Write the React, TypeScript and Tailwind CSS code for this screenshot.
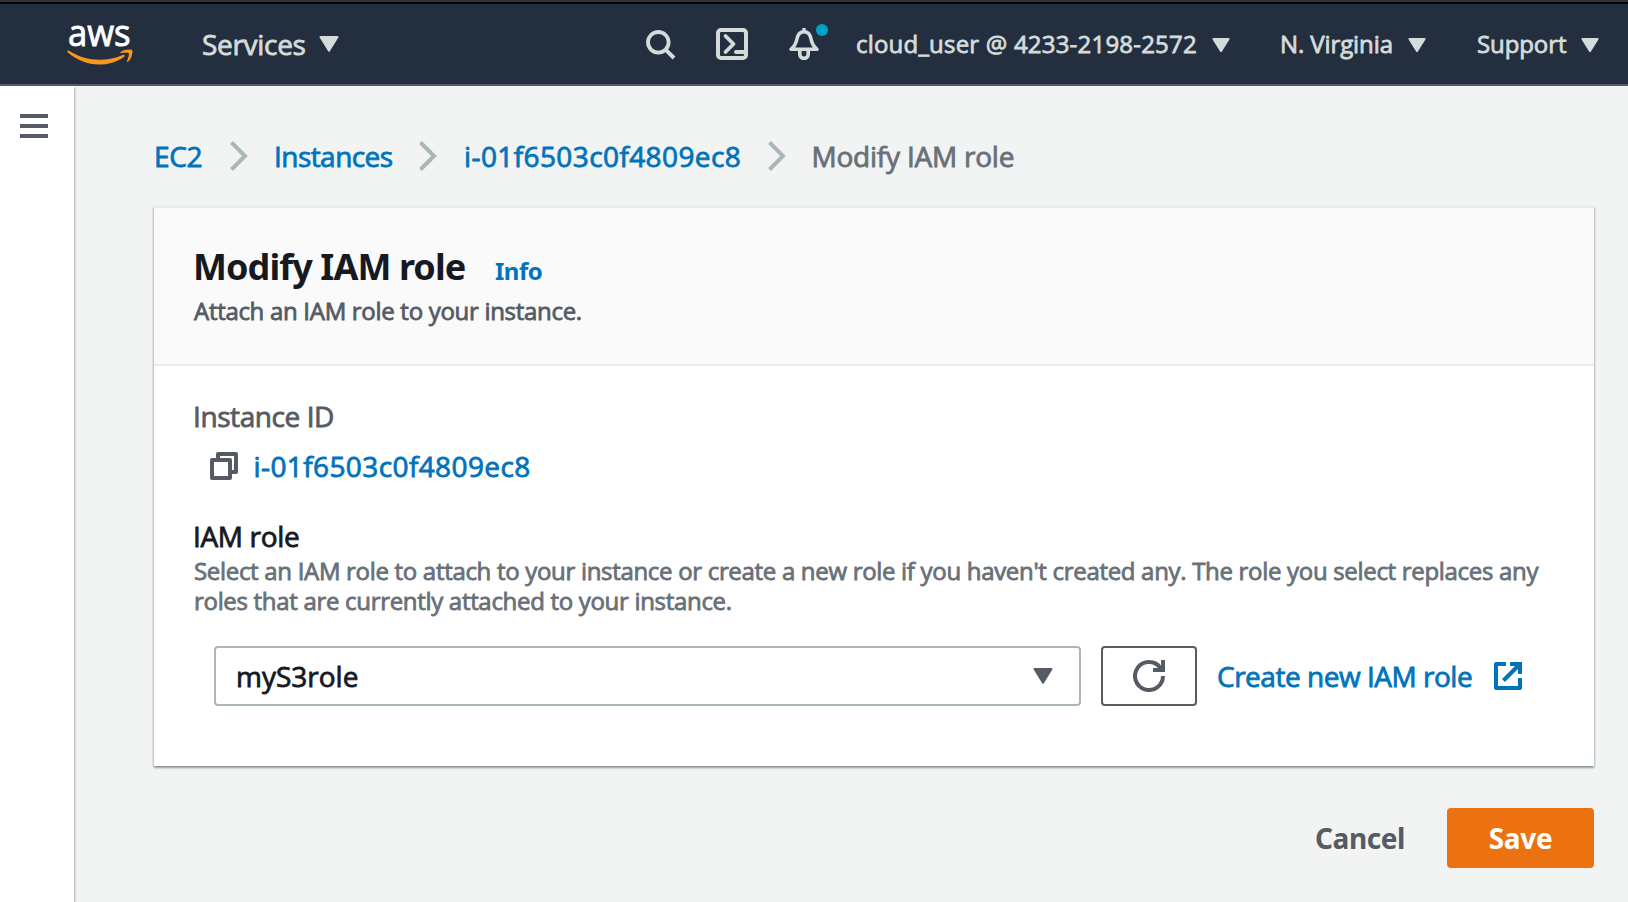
import React from "react";

function Caret({ className, small }: { className: string; small?: boolean }) {
  return (
    <svg
      className={"shrink-0 " + className}
      width={small ? 18 : 20}
      height={small ? 14.5 : 16}
      viewBox="0 0 20 16"
      preserveAspectRatio="none"
    >
      <path d="M1.5 1h17L10 14.6z" fill="currentColor" stroke="currentColor" strokeWidth="2" strokeLinejoin="round" />
    </svg>
  );
}

function Chevron() {
  return (
    <svg className="shrink-0 text-[#aab7b8]" width="18" height="30" viewBox="0 0 18 30">
      <path d="M1.5 1.5 15 15 1.5 28.5" fill="none" stroke="currentColor" strokeWidth="4" />
    </svg>
  );
}

function AwsLogo() {
  return (
    <svg className="shrink-0" width="68" height="74" viewBox="0 -14 68 74">
      <text
        x="2"
        y="25"
        textLength="62.500"
        lengthAdjust="spacingAndGlyphs"
        fill="#fff"
        stroke="#fff"
        strokeWidth="0.9"
        className="font-['Open_Sans',sans-serif] text-[36px]"
      >
        aws
      </text>
      <g transform="translate(0 -1)" fill="#f7981d">
        <path d="M1.200 31.200c.3-.6.9-.8 1.600-.4 9.600 5.800 19.600 9 30.600 9 7.500 0 15.600-1.600 23.400-4.900 1.500-.6 2.600 1 1.200 2-7.200 5.100-16.600 7.600-24.800 7.600-11.800 0-22.600-4.500-31.300-12-.6-.5-.9-.9-.7-1.300z" />
        <path d="M54.300 32.200c3.200-2.500 8.800-3 11.200-2.400 1 .3 1 1.400.9 2.700-.3 3.100-1.700 6.900-4.200 9.100-.8.700-1.500.3-1.200-.6.9-2.300 2.600-6.600 1.800-7.700-.8-1-5-.6-7.500-.3-1 .1-1.500-.4-1-.8z" />
      </g>
    </svg>
  );
}

function SearchIcon() {
  return (
    <svg className="shrink-0" width="30" height="30" viewBox="0 0 30 30" fill="none" stroke="currentColor">
      <circle cx="12.300" cy="12.300" r="10.300" strokeWidth="3.800" />
      <path d="M19.600 19.600 28 28" strokeWidth="4" />
    </svg>
  );
}

function TerminalIcon() {
  return (
    <svg className="shrink-0" width="32" height="32" viewBox="0 0 32 32" fill="none" stroke="currentColor">
      <rect x="2" y="2" width="28" height="28" rx="3" strokeWidth="4" />
      <path d="M9.500 8 17.500 16 9.500 24" strokeWidth="3.800" strokeLinecap="round" strokeLinejoin="round" />
      <path d="M20 24h9" strokeWidth="4" strokeLinecap="round" />
    </svg>
  );
}

function BellIcon() {
  return (
    <svg className="shrink-0" width="32" height="32" viewBox="0 0 32 32" fill="none" stroke="currentColor">
      <path
        d="M3 21.300C7 18 8 15.500 8.800 11.500 9.700 6.500 12 3.800 16 3.800s6.300 2.700 7.200 7.700c.8 4 1.800 6.500 5.800 9.800z"
        strokeWidth="3.600"
        strokeLinejoin="round"
      />
      <path d="M16 0v4" strokeWidth="3.400" />
      <path d="M11.800 23v3.200a4.200 4.200 0 0 0 8.400 0V23" strokeWidth="3.600" />
    </svg>
  );
}

function CopyIcon() {
  return (
    <svg className="shrink-0 text-[#545b64]" width="28" height="28" viewBox="0 0 28 28" fill="none" stroke="currentColor" strokeWidth="4" strokeLinejoin="round">
      <path d="M8 7V2h18v18h-5" />
      <path d="M2 8h18v18H2z" />
    </svg>
  );
}

function RefreshIcon() {
  return (
    <svg width="32" height="32" viewBox="0 0 32 32" fill="none" stroke="currentColor" strokeWidth="4">
      <path d="M30 16A14 14 0 1 1 27.200 7.600L28.400 10" />
      <path d="M30 0v10H20" />
    </svg>
  );
}

function ExternalIcon() {
  return (
    <svg className="shrink-0" width="28" height="28" viewBox="0 0 28 28" fill="none" stroke="currentColor" strokeWidth="4">
      <path d="M12 2H2v24h24V16" strokeLinejoin="round" />
      <path d="M16 2h10v10" />
      <path d="M25.500 2.500 9.500 18.500" />
    </svg>
  );
}

export default function App() {
  return (
    <div className="flex h-[902px] w-[1628px] flex-col overflow-hidden bg-[#f2f3f3] font-['Open_Sans','Noto_Sans',sans-serif] [-webkit-text-stroke:0.8px] whitespace-nowrap">
      <div className="h-[2px] shrink-0 bg-[#323237]" />
      <div className="h-[2px] shrink-0 bg-[#070707]" />
      <header className="flex h-[82px] shrink-0 items-center border-b-2 border-[#545b64] bg-[#232f3e] pl-[66px] text-2xl leading-9 text-[#d5dbdb]">
        <AwsLogo />
        <button className="ml-[68px] flex items-center text-[28px]">
          <span className="w-[117px] text-left tracking-[-0.3px]">Services</span>
          <Caret className="" />
        </button>
        <div className="ml-[307px] flex items-center">
          <div className="mt-0.5">
            <SearchIcon />
          </div>
          <div className="ml-[40px] flex">
            <TerminalIcon />
          </div>
          <div className="relative ml-[40px] flex">
            <BellIcon />
            <span className="absolute top-[-4px] left-[28px] size-3 rounded-full bg-[#00a1c9]" />
          </div>
        </div>
        <button className="ml-[36px] flex items-center">
          <span className="w-[356px] text-left tracking-[0.2px]">cloud_user @ 4233-2198-2572</span>
          <Caret small className="mt-0.5" />
        </button>
        <button className="ml-[50px] flex items-center">
          <span className="w-[128px] text-left tracking-[-0.1px]">N. Virginia</span>
          <Caret small className="mt-0.5" />
        </button>
        <button className="ml-[51px] flex items-center">
          <span className="w-[104px] text-left tracking-[-0.1px]">Support</span>
          <Caret small className="mt-0.5" />
        </button>
      </header>

      <div className="flex min-h-0 flex-1">
        <aside className="w-[74px] shrink-0 bg-white pt-7 pl-5 shadow-[1px_2px_2px_0_rgba(0,28,36,0.3)]">
          <div className="flex w-7 flex-col gap-1.5">
            <span className="h-1 bg-[#545b64]" />
            <span className="h-1 bg-[#545b64]" />
            <span className="h-1 bg-[#545b64]" />
          </div>
        </aside>

        <main className="flex-1 pt-[52px] pr-[34px] pl-[80px]">
          <nav className="flex h-9 items-center text-[28px] leading-9 text-[#0073bb]">
            <a className="w-[76px] tracking-[-0.3px]">EC2</a>
            <Chevron />
            <a className="ml-[26px] w-[145px] tracking-[-0.55px]">Instances</a>
            <Chevron />
            <a className="ml-[27px] w-[303.500px] tracking-[0.4px]">i-01f6503c0f4809ec8</a>
            <Chevron />
            <span className="ml-[26px] tracking-[-0.22px] text-[#687078]">Modify IAM role</span>
          </nav>

          <section className="mt-8 border-t-2 border-[#eaeded] bg-white shadow-[0_2px_2px_0_rgba(0,28,36,0.3),1px_1px_2px_0_rgba(0,28,36,0.15),-1px_1px_2px_0_rgba(0,28,36,0.15)]">
            <div className="border-b-2 border-[#eaeded] bg-[#fafafa] px-10 pt-[37px] pb-[38px]">
              <div className="flex items-baseline font-['Noto_Sans',sans-serif] font-bold [-webkit-text-stroke:0]">
                <h1 className="-ml-px w-[302px] text-4xl leading-[44px] tracking-[-0.92px] text-[#16191f]">Modify IAM role</h1>
                <a className="text-2xl leading-8 tracking-[-0.5px] text-[#0073bb]">Info</a>
              </div>
              <p className="mt-[7px] text-2xl leading-[30px] tracking-[-0.3px] text-[#545b64]">Attach an IAM role to your instance.</p>
            </div>

            <div className="px-10 pt-8 pb-[60px]">
              <div className="-ml-px text-[28px] leading-9 tracking-[-0.42px] text-[#545b64]">Instance ID</div>
              <div className="mt-3.5 flex items-center pl-4">
                <CopyIcon />
                <a className="ml-[15.500px] text-[28px] leading-9 tracking-[0.4px] text-[#0073bb]">i-01f6503c0f4809ec8</a>
              </div>
              <div className="mt-[34px] -ml-px text-[28px] leading-9 tracking-[-0.35px] text-[#16191f]">IAM role</div>
              <p className="mt-0.5 text-2xl leading-[30px] tracking-[-0.31px] text-[#687078]">
                Select an IAM role to attach to your instance or create a new role if you haven't created any. The role you select replaces any
                <br />
                roles that are currently attached to your instance.
              </p>
              <div className="mt-[30px] flex items-center pl-5 text-[28px] leading-9">
                <div className="flex h-[60px] w-[867px] items-center justify-between rounded border-2 border-[#aab7b8] bg-white pr-[26px] pl-[20px] text-[#16191f]">
                  <span>myS3role</span>
                  <Caret className="text-[#545b64]" />
                </div>
                <button className="ml-5 flex h-[60px] w-24 items-center justify-center rounded border-2 border-[#545b64] text-[#545b64]">
                  <RefreshIcon />
                </button>
                <a className="ml-5 flex items-center text-[#0073bb]">
                  <span className="w-[277px] tracking-[-0.48px]">Create new IAM role</span>
                  <ExternalIcon />
                </a>
              </div>
            </div>
          </section>

          <div className="mt-[42px] flex items-center justify-end font-['Noto_Sans',sans-serif] text-[28px] leading-9 font-bold [-webkit-text-stroke:0]">
            <button className="w-[132px] text-left tracking-[-0.4px] text-[#545b64]">Cancel</button>
            <button className="h-[60px] w-[147px] rounded bg-[#ec7211] tracking-[-0.3px] text-white">Save</button>
          </div>
        </main>
      </div>
    </div>
  );
}
